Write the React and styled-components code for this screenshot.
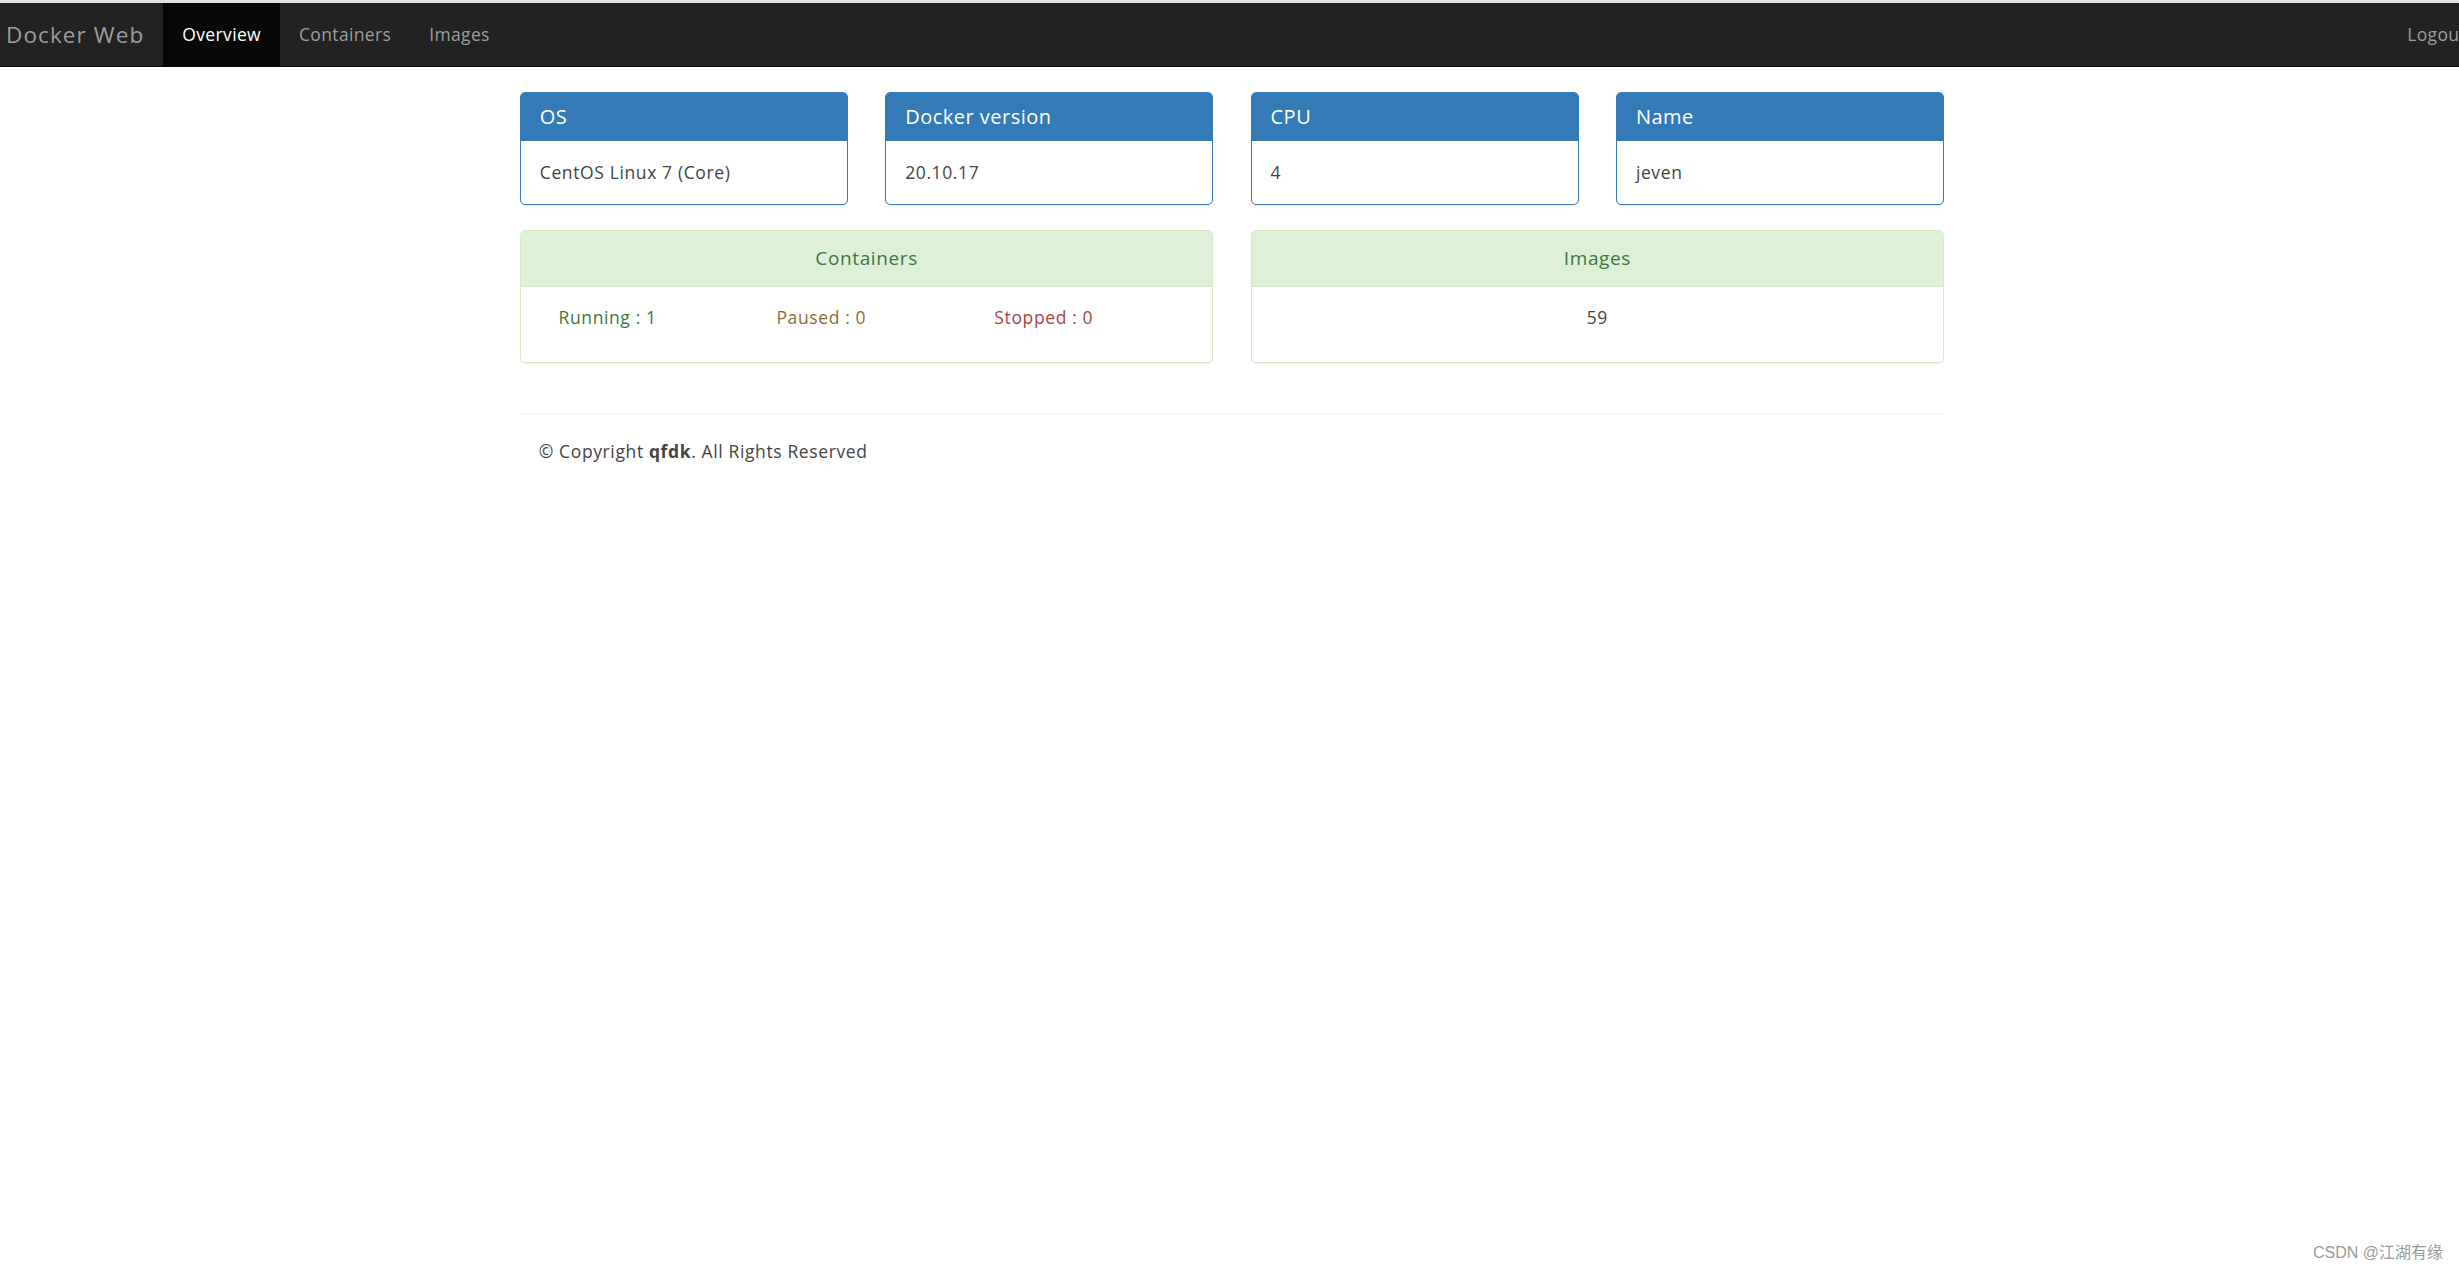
import React from "react";
import styled, { createGlobalStyle } from "styled-components";

// Global page reset

const GlobalStyle = createGlobalStyle`
  html, body {
    margin: 0;
    padding: 0;
    background: #fff;
  }
  body {
    font-family: "Open Sans", "Noto Sans", Arial, sans-serif;
    font-size: 17.5px;
    line-height: 1.42857;
    letter-spacing: 0.62px;
    color: #444;
    overflow-x: hidden;
  }
  * {
    box-sizing: border-box;
  }
`;

// Styled components

const Page = styled.div`
  min-height: 100vh;
  position: relative;
`;

const TopStrip = styled.div`
  height: 3.3px;
  background: #e2e2e2;
`;

const Navbar = styled.nav`
  height: 63.75px;
  background: #222;
  border-bottom: 1.25px solid #080808;
  display: flex;
  align-items: stretch;
  overflow: hidden;
`;

const Brand = styled.a`
  display: flex;
  align-items: center;
  padding: 0 19px 0 6px;
  font-size: 22.5px;
  letter-spacing: 1.1px;
  color: #9d9d9d;
  text-decoration: none;
`;

const NavList = styled.ul`
  display: flex;
  list-style: none;
  margin: 0;
  padding: 0;
`;

const NavRight = styled(NavList)`
  margin-left: auto;
  margin-right: -26px;
`;

const NavLink = styled.a`
  display: flex;
  align-items: center;
  height: 100%;
  padding: 0 19px;
  letter-spacing: 0.35px;
  color: ${(p) => (p.$active ? "#fff" : "#9d9d9d")};
  background: ${(p) => (p.$active ? "#080808" : "transparent")};
  text-decoration: none;
  white-space: nowrap;
`;

const Main = styled.main`
  width: 1424px;
  margin-left: calc(50% - 709.5px);
  padding-top: 25px;
`;

const Row = styled.div`
  display: grid;
  grid-template-columns: repeat(${(p) => p.$cols}, 1fr);
  column-gap: 37.5px;
`;

const Panel = styled.div`
  background: #fff;
  border: 1.25px solid ${(p) => (p.$variant === "success" ? "#d6e9c6" : "#337ab7")};
  border-radius: 5px;
  margin-bottom: 25px;
  box-shadow: 0 1px 1px rgba(0, 0, 0, 0.05);
`;

const PanelHeading = styled.div`
  padding: 12.5px 18.75px;
  border-bottom: 1.25px solid ${(p) => (p.$variant === "success" ? "#d6e9c6" : "#337ab7")};
  border-radius: 3.75px 3.75px 0 0;
  background: ${(p) => (p.$variant === "success" ? "#dff0d8" : "#337ab7")};
  color: ${(p) => (p.$variant === "success" ? "#3c763d" : "#fff")};
  text-align: ${(p) => (p.$variant === "success" ? "center" : "left")};
`;

const PanelTitle = styled.h3`
  margin: 0;
  font-size: 20px;
  font-weight: 400;
  line-height: 1.1;
  letter-spacing: 0.5px;
`;

const HeadingText = styled.div`
  font-size: 19px;
  line-height: 30px;
`;

const PanelBody = styled.div`
  padding: 18.75px;
`;

const Para = styled.p`
  margin: 0;
`;

const StatGrid = styled.div`
  display: grid;
  grid-template-columns: repeat(3, 1fr);
  margin-bottom: 12.5px;
`;

const Stat = styled.span`
  padding-left: 18.75px;
  color: ${(p) => p.$color};
`;

const Count = styled.p`
  margin: 0 0 12.5px;
  text-align: center;
`;

const Divider = styled.hr`
  margin: 25px 0;
  border: 0;
  border-top: 1.25px solid #eee;
`;

const Footer = styled.footer`
  padding-left: 18.75px;
`;

const Watermark = styled.div`
  position: absolute;
  right: 16px;
  bottom: 8px;
  font-family: "Liberation Sans", "Noto Sans CJK SC", sans-serif;
  font-size: 16px;
  letter-spacing: 0;
  color: #9a9a9a;
`;

const info = [
  { title: "OS", value: "CentOS Linux 7 (Core)" },
  { title: "Docker version", value: "20.10.17" },
  { title: "CPU", value: "4" },
  { title: "Name", value: "jeven" },
];

const App = () => {
  return (
    <>
      <GlobalStyle />
      <Page>
        <TopStrip />
        <Navbar>
          <Brand href="#">Docker Web</Brand>
          <NavList>
            <li>
              <NavLink href="#" $active>
                Overview
              </NavLink>
            </li>
            <li>
              <NavLink href="#">Containers</NavLink>
            </li>
            <li>
              <NavLink href="#">Images</NavLink>
            </li>
          </NavList>
          <NavRight>
            <li>
              <NavLink href="#">Logout</NavLink>
            </li>
          </NavRight>
        </Navbar>

        <Main>
          <Row $cols={4}>
            {info.map((item) => (
              <Panel key={item.title}>
                <PanelHeading>
                  <PanelTitle>{item.title}</PanelTitle>
                </PanelHeading>
                <PanelBody>
                  <Para>{item.value}</Para>
                </PanelBody>
              </Panel>
            ))}
          </Row>

          <Row $cols={2}>
            <Panel $variant="success">
              <PanelHeading $variant="success">
                <HeadingText>Containers</HeadingText>
              </PanelHeading>
              <PanelBody>
                <StatGrid>
                  <Stat $color="#3c763d">Running : 1</Stat>
                  <Stat $color="#8a6d3b">Paused : 0</Stat>
                  <Stat $color="#a94442">Stopped : 0</Stat>
                </StatGrid>
              </PanelBody>
            </Panel>
            <Panel $variant="success">
              <PanelHeading $variant="success">
                <HeadingText>Images</HeadingText>
              </PanelHeading>
              <PanelBody>
                <Count>59</Count>
              </PanelBody>
            </Panel>
          </Row>

          <Divider />
          <Footer>
            © Copyright <strong>qfdk</strong>. All Rights Reserved
          </Footer>
        </Main>

        <Watermark>CSDN @江湖有缘</Watermark>
      </Page>
    </>
  );
};

export default App;
